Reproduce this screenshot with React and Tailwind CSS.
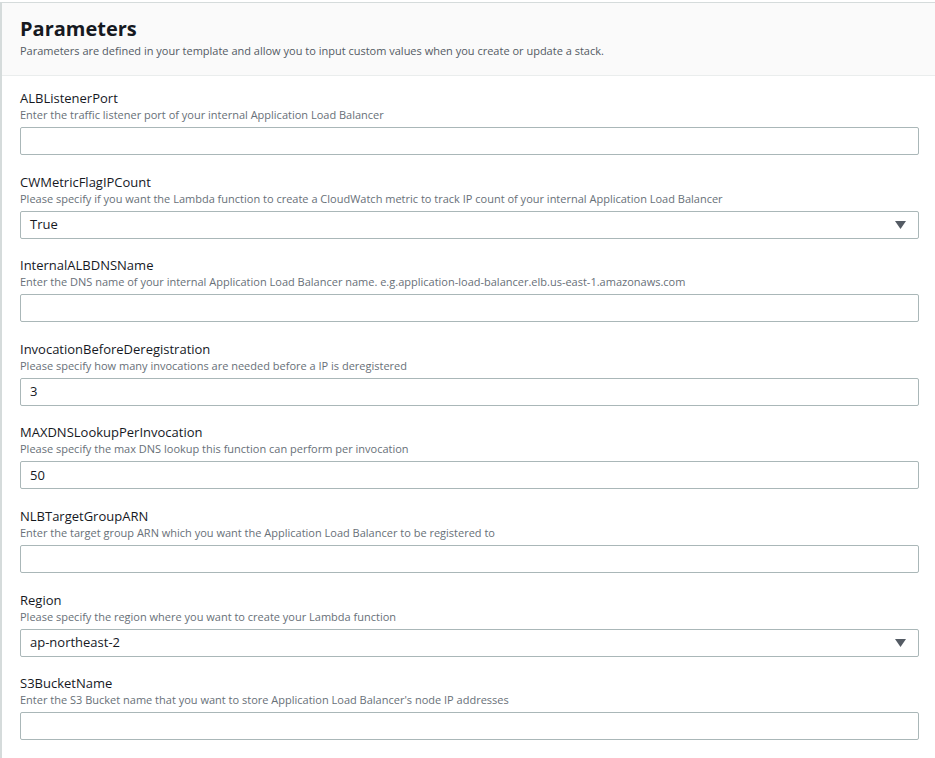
const fields = [
    { name: 'ALBListenerPort', desc: 'Enter the traffic listener port of your internal Application Load Balancer', value: '' },
    { name: 'CWMetricFlagIPCount', desc: 'Please specify if you want the Lambda function to create a CloudWatch metric to track IP count of your internal Application Load Balancer', value: 'True', select: true },
    { name: 'InternalALBDNSName', desc: 'Enter the DNS name of your internal Application Load Balancer name. e.g.application-load-balancer.elb.us-east-1.amazonaws.com', value: '' },
    { name: 'InvocationBeforeDeregistration', desc: 'Please specify how many invocations are needed before a IP is deregistered', value: '3' },
    { name: 'MAXDNSLookupPerInvocation', desc: 'Please specify the max DNS lookup this function can perform per invocation', value: '50' },
    { name: 'NLBTargetGroupARN', desc: 'Enter the target group ARN which you want the Application Load Balancer to be registered to', value: '' },
    { name: 'Region', desc: 'Please specify the region where you want to create your Lambda function', value: 'ap-northeast-2', select: true },
    { name: 'S3BucketName', desc: "Enter the S3 Bucket name that you want to store Application Load Balancer's node IP addresses", value: '' },
];

const Field = ({ field }) => (
    <div>
        <div className="text-[13px] leading-[18px] text-[#16191f]">{field.name}</div>
        <div className="text-[11px] leading-[16px] text-[#687078]">{field.desc}</div>
        <div className="mt-[4px] h-[28px] flex items-center justify-between border border-[#aab7b8] rounded-[2px] bg-white pl-[9px] pr-[12px]">
            <span className="text-[13px] text-[#16191f]">{field.value}</span>
            {field.select && (
                <svg width="11" height="8" viewBox="0 0 11 8">
                    <path d="M0 0 H11 L5.5 8 Z" fill="#545b64" />
                </svg>
            )}
        </div>
    </div>
);

const App = () => {
    return (
        <div className="min-h-screen bg-white pt-[2px]" style={{ fontFamily: '"Open Sans", "Noto Sans", sans-serif' }}>
            <div className="border-l-2 border-t border-[#d5dbdb] h-[756px] overflow-hidden">
                <div className="bg-[#fafafa] border-b border-[#eaeded] pl-[18px] pt-[13px] pb-[16px]">
                    <h2 className="text-[20px] leading-[26px] font-bold text-[#16191f]">Parameters</h2>
                    <p className="text-[11px] leading-[16px] text-[#545b64] mt-[1px]">
                        Parameters are defined in your template and allow you to input custom values when you create or update a stack.
                    </p>
                </div>
                <div className="pl-[18px] pr-[16px] pt-[13px] flex flex-col gap-[17.6px]">
                    {fields.map(f => <Field key={f.name} field={f} />)}
                </div>
            </div>
        </div>
    );
};

export default App;
